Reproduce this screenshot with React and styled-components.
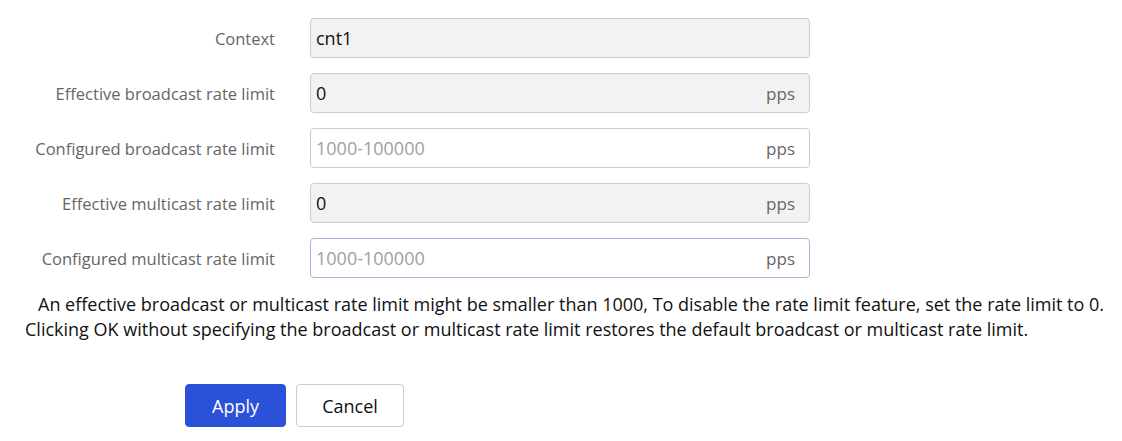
import styled, { createGlobalStyle } from "styled-components";

const GlobalStyle = createGlobalStyle`
  body {
    margin: 0;
    background: #ffffff;
    font-family: "Open Sans", "Noto Sans", sans-serif;
  }
`;

const Page = styled.div`
  width: 1122px;
  height: 441px;
  padding-top: 18px;
  box-sizing: border-box;
`;

const Form = styled.div`
  display: flex;
  flex-direction: column;
  gap: 15px;
`;

const Row = styled.div`
  display: grid;
  grid-template-columns: 275px 500px;
  column-gap: 35px;
  align-items: center;
`;

const Label = styled.label`
  text-align: right;
  font-size: 16.5px;
  color: #666666;
`;

const Field = styled.div`
  height: 40px;
  box-sizing: border-box;
  display: flex;
  align-items: center;
  justify-content: space-between;
  padding: 0 14px 0 5px;
  border: 1px solid ${(p) => (p.$focused ? "#a9b5da" : "#cccccc")};
  border-radius: 4px;
  background: ${(p) => (p.$readOnly ? "#f2f2f2" : "#ffffff")};
`;

const Value = styled.span`
  font-size: 18px;
  color: ${(p) => (p.$placeholder ? "#a0a0a0" : "#111111")};
`;

const Unit = styled.span`
  font-size: 17px;
  color: #666666;
`;

const Note = styled.p`
  margin: 14px 0 0;
  padding-left: 25px;
  text-indent: 13px;
  font-size: 18px;
  line-height: 25px;
  color: #111111;
  white-space: nowrap;
`;

const Actions = styled.div`
  display: flex;
  gap: 10px;
  margin: 42px 0 0 185px;
`;

const Button = styled.button`
  height: 43px;
  min-width: ${(p) => (p.$primary ? "101px" : "108px")};
  padding: 0 20px;
  border-radius: 4px;
  border: 1px solid ${(p) => (p.$primary ? "#2b51d9" : "#cccccc")};
  background: ${(p) => (p.$primary ? "#2b51d9" : "#ffffff")};
  color: ${(p) => (p.$primary ? "#ffffff" : "#111111")};
  font-family: inherit;
  font-size: 18px;
`;

const rows = [
  { label: "Context", value: "cnt1", readOnly: true },
  { label: "Effective broadcast rate limit", value: "0", unit: "pps", readOnly: true },
  { label: "Configured broadcast rate limit", value: "1000-100000", unit: "pps", placeholder: true },
  { label: "Effective multicast rate limit", value: "0", unit: "pps", readOnly: true },
  { label: "Configured multicast rate limit", value: "1000-100000", unit: "pps", placeholder: true, focused: true },
];

export default function App() {
  return (
    <>
      <GlobalStyle />
      <Page>
        <Form>
          {rows.map((r) => (
            <Row key={r.label}>
              <Label>{r.label}</Label>
              <Field $readOnly={r.readOnly} $focused={r.focused}>
                <Value $placeholder={r.placeholder}>{r.value}</Value>
                {r.unit && <Unit>{r.unit}</Unit>}
              </Field>
            </Row>
          ))}
        </Form>
        <Note>
          An effective broadcast or multicast rate limit might be smaller than 1000, To disable the rate limit feature, set the rate limit to 0.
          <br />
          Clicking OK without specifying the broadcast or multicast rate limit restores the default broadcast or multicast rate limit.
        </Note>
        <Actions>
          <Button $primary>Apply</Button>
          <Button>Cancel</Button>
        </Actions>
      </Page>
    </>
  );
}
